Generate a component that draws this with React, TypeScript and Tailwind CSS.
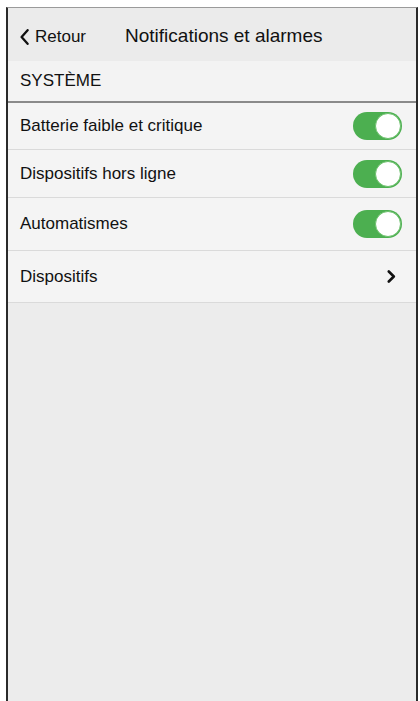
import React from "react";

function Toggle() {
  return (
    <div className="w-[49px] h-[28px] rounded-full bg-[#4caf50] flex items-center justify-end pr-[1px]">
      <div className="w-[26px] h-[26px] rounded-full bg-white border-[1.5px] border-[#6cc06c]" />
    </div>
  );
}

function Row({ label, h, right }: { label: string; h: string; right: React.ReactNode }) {
  return (
    <div className={`flex items-center justify-between pl-[12px] pr-[14px] border-b border-[#dadada] bg-[#f4f4f4] ${h}`}>
      <span className="text-[17px] text-[#111]">{label}</span>
      {right}
    </div>
  );
}

export default function App() {
  return (
    <div className="w-[420px] h-[701px] bg-white pl-[6px] pt-[7px] pr-[2px] overflow-hidden" style={{ fontFamily: '"Liberation Sans", Arial, sans-serif' }}>
      <div className="h-[720px] border-l-2 border-r-2 border-t border-l-[#2a2a2a] border-r-[#2a2a2a] border-t-[#9a9a9a] bg-[#ececec] flex flex-col">
        <div className="h-[53px] bg-[#ebebeb] flex items-center pl-[12px] pt-[4px]">
          <div className="flex items-center mt-[1px]">
            <svg width="9" height="16" viewBox="0 0 9 16" className="mr-[6px]">
              <path d="M7.6 1.2 L1.6 8 L7.6 14.8" fill="none" stroke="#111" strokeWidth="2.3" strokeLinecap="round" strokeLinejoin="round" />
            </svg>
            <span className="text-[17px] text-[#111]">Retour</span>
          </div>
          <span className="ml-[39px] text-[19px] text-[#111]">Notifications et alarmes</span>
        </div>
        <div className="h-[42px] bg-[#f3f3f3] flex items-center pl-[12px] border-b-2 border-[#8a8a8a]">
          <span className="text-[17px] text-[#111]">SYSTÈME</span>
        </div>
        <Row label="Batterie faible et critique" h="h-[47px]" right={<Toggle />} />
        <Row label="Dispositifs hors ligne" h="h-[48px]" right={<Toggle />} />
        <Row label="Automatismes" h="h-[53px]" right={<Toggle />} />
        <Row
          label="Dispositifs"
          h="h-[52px]"
          right={
            <svg width="9" height="13" viewBox="0 0 9 13" className="mr-[6px]">
              <path d="M1.8 1.5 L6.8 6.5 L1.8 11.5" fill="none" stroke="#111" strokeWidth="2.6" strokeLinecap="round" strokeLinejoin="round" />
            </svg>
          }
        />
        <div className="flex-1 bg-[#ececec]" />
      </div>
    </div>
  );
}
